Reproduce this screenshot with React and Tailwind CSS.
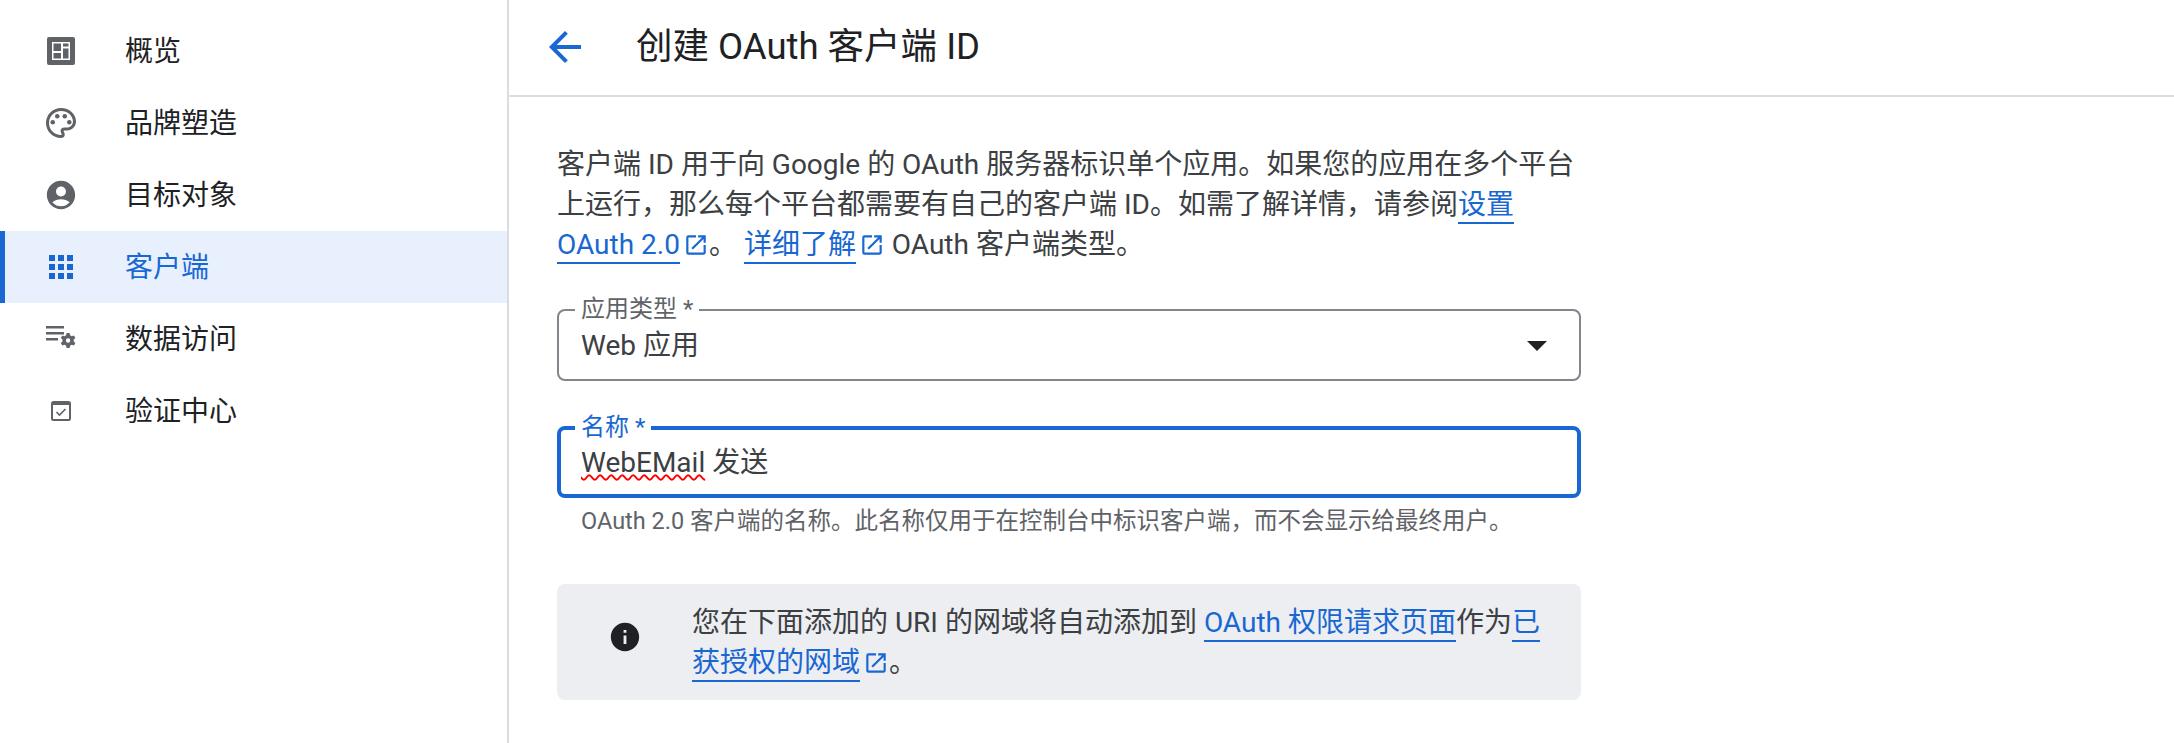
const font = { fontFamily: "Roboto, 'Noto Sans CJK SC', sans-serif" };

const ExternalIcon = ({ className }) => (
  <svg viewBox="0 0 24 24" className={className} fill="currentColor">
    <path d="M19 19H5V5h7V3H5a2 2 0 0 0-2 2v14a2 2 0 0 0 2 2h14c1.1 0 2-.9 2-2v-7h-2v7zM14 3v2h3.59l-9.83 9.83 1.41 1.41L19 6.41V10h2V3h-7z" />
  </svg>
);

const OverviewIcon = () => (
  <svg viewBox="0 0 28 28" className="w-[28px] h-[28px]" fill="#5f6368">
    <path
      fillRule="evenodd"
      d="M2 0h24a2 2 0 0 1 2 2v24a2 2 0 0 1-2 2H2a2 2 0 0 1-2-2V2a2 2 0 0 1 2-2zM5 5v18h18V5H5zm1.5 1.5h7.5v7.5H6.500V6.500zm9.500 0h5.500v3H16v-3zm0 5h5.500v10H16v-10zM6.500 16H14v5.500H6.500V16z"
    />
  </svg>
);

const PaletteIcon = () => (
  <svg viewBox="0 0 24 24" className="w-[36px] h-[36px]" fill="#5f6368">
    <path d="M12 22C6.49 22 2 17.51 2 12S6.49 2 12 2s10 4.04 10 9c0 3.31-2.69 6-6 6h-1.77c-.28 0-.5.22-.5.5 0 .12.05.23.13.33.41.47.64 1.06.64 1.67A2.5 2.5 0 0 1 12 22zm0-18c-4.41 0-8 3.59-8 8s3.59 8 8 8c.28 0 .5-.22.5-.5a.54.54 0 0 0-.14-.35c-.41-.46-.63-1.05-.63-1.65a2.5 2.5 0 0 1 2.5-2.5H16c2.21 0 4-1.79 4-4 0-3.86-3.59-7-8-7z" />
    <circle cx="6.500" cy="11.500" r="1.500" />
    <circle cx="9.500" cy="7.500" r="1.500" />
    <circle cx="14.500" cy="7.500" r="1.500" />
    <circle cx="17.500" cy="11.500" r="1.500" />
  </svg>
);

const AccountIcon = () => (
  <svg viewBox="0 0 24 24" className="w-[34px] h-[34px]" fill="#5f6368">
    <path d="M12 2C6.48 2 2 6.48 2 12s4.48 10 10 10 10-4.48 10-10S17.52 2 12 2zm0 4c1.93 0 3.5 1.57 3.5 3.5S13.93 13 12 13s-3.5-1.57-3.5-3.5S10.07 6 12 6zm0 14c-2.03 0-4.43-.82-6.14-2.88C7.55 15.8 9.68 15 12 15s4.45.8 6.14 2.12C16.43 19.18 14.03 20 12 20z" />
  </svg>
);

const AppsIcon = () => (
  <svg viewBox="0 0 24 24" className="w-[24px] h-[24px]" fill="#1967d2">
    <path d="M0 0h6v6H0zM9 0h6v6H9zM18 0h6v6h-6zM0 9h6v6H0zM9 9h6v6H9zM18 9h6v6h-6zM0 18h6v6H0zM9 18h6v6H9zM18 18h6v6h-6z" />
  </svg>
);

const DataIcon = () => (
  <svg viewBox="0 0 30 26" className="w-[30px] h-[26px]" fill="#5f6368">
    <path d="M0 0h18v2.500H0zM0 6h18v2.500H0zM0 12h12v2.500H0z" />
    <path
      fillRule="evenodd"
      d="M20.600 7h3l.5 2.300 1.600.9 2.200-.8 1.500 2.600-1.700 1.600v1.800l1.700 1.600-1.500 2.600-2.200-.8-1.600.9-.5 2.300h-3l-.5-2.300-1.600-.9-2.200.8-1.500-2.600 1.700-1.600v-1.800l-1.700-1.600 1.500-2.600 2.200.8 1.600-.9zM22.100 12.300a2.200 2.200 0 1 0 0 4.400 2.200 2.200 0 0 0 0-4.400z"
    />
  </svg>
);

const CheckIcon = () => (
  <svg viewBox="0 0 20 20" className="w-[20px] h-[20px]" fill="none">
    <rect x="1" y="1" width="18" height="18" rx="1.500" stroke="#5f6368" strokeWidth="2" />
    <path d="M1 2.500h18" stroke="#5f6368" strokeWidth="3" />
    <path d="M5.500 11l3 3 6-6" stroke="#5f6368" strokeWidth="1.600" />
  </svg>
);

const menuItems = [
  { label: "概览", icon: <OverviewIcon /> },
  { label: "品牌塑造", icon: <PaletteIcon /> },
  { label: "目标对象", icon: <AccountIcon /> },
  { label: "客户端", icon: <AppsIcon />, active: true },
  { label: "数据访问", icon: <DataIcon /> },
  { label: "验证中心", icon: <CheckIcon /> },
];

const SideBar = () => {
  return (
    <div className="w-[509px] shrink-0 border-r-2 border-[#dadce0] pt-[15px]">
      {menuItems.map((item) => {
        return (
          <div
            key={item.label}
            className={
              item.active
                ? "h-[72px] flex items-center border-l-[5px] border-[#1967d2] bg-[#e8f0fe] text-[#1967d2]"
                : "h-[72px] flex items-center border-l-[5px] border-transparent text-[#202124]"
            }
          >
            <div className="w-[112px] shrink-0 flex justify-center">{item.icon}</div>
            <span className="text-[28px] leading-[36px] pl-[8px] mt-[2px]">{item.label}</span>
          </div>
        );
      })}
    </div>
  );
};

const TextLink = ({ children }) => (
  <span className="text-[#1967d2] border-b-2 border-[#1967d2] pb-px">{children}</span>
);

const App = () => {
  return (
    <div style={font} className="flex h-[743px] w-[2174px] overflow-hidden bg-white">
      <SideBar />
      <div className="flex-1">
        <div className="h-[97px] border-b-2 border-[#dadce0] flex items-center pl-[32px]">
          <svg viewBox="0 0 24 24" className="w-[48px] h-[48px] -mt-[2px]" fill="#1967d2">
            <path d="M20 11H7.830l5.590-5.590L12 4l-8 8 8 8 1.410-1.410L7.830 13H20v-2z" />
          </svg>
          <h1 className="ml-[47px] text-[36.500px] font-normal text-[#202124]">创建 OAuth 客户端 ID</h1>
        </div>
        <div className="pl-[48px] w-[1072px] pt-[48px]">
          <p className="text-[28px] leading-[40px] text-[#3c4043]">
            客户端 ID 用于向 Google 的 OAuth 服务器标识单个应用。如果您的应用在多个平台上运行，那么每个平台都需要有自己的客户端 ID。如需了解详情，请参阅
            <TextLink>设置</TextLink> <TextLink>OAuth 2.0</TextLink>
            <ExternalIcon className="inline w-[26px] h-[26px] ml-[3px] text-[#1967d2] align-[-4px]" />
            。 <TextLink>详细了解</TextLink>
            <ExternalIcon className="inline w-[26px] h-[26px] ml-[3px] text-[#1967d2] align-[-4px]" />
            {" "}OAuth 客户端类型。
          </p>

          <div className="relative mt-[44px] h-[72px] border-2 border-[#80868b] rounded-[8px] flex items-center justify-between pl-[22px] pr-[32px] pt-[2px]">
            <span className="absolute -top-[14px] left-[16px] bg-white px-[6px] text-[24px] leading-[24px] text-[#5f6368]">应用类型 *</span>
            <span className="text-[28px] text-[#3c4043]">Web 应用</span>
            <span className="w-0 h-0 border-l-[10px] border-r-[10px] border-t-[10px] border-l-transparent border-r-transparent border-t-[#202124]"></span>
          </div>

          <div className="relative mt-[45px] h-[72px] border-[4px] border-[#1967d2] rounded-[8px] flex items-center pl-[20px] pt-[2px]">
            <span className="absolute -top-[15px] left-[14px] bg-white px-[6px] text-[24px] leading-[24px] text-[#1967d2]">名称 *</span>
            <span className="text-[28px] text-[#3c4043]">
              <span className="underline decoration-wavy decoration-[#ff0000] decoration-2 underline-offset-2">WebEMail</span> 发送
            </span>
          </div>
          <p className="mt-[9px] pl-[24px] text-[23.500px] leading-[28px] text-[#5f6368]">
            OAuth 2.0 客户端的名称。此名称仅用于在控制台中标识客户端，而不会显示给最终用户。
          </p>

          <div className="mt-[49px] h-[116px] bg-[#edeef2] rounded-[8px] flex items-center">
            <div className="w-[135px] shrink-0 flex justify-center">
              <svg viewBox="0 0 24 24" className="w-[34px] h-[34px] -mt-[10px]" fill="#202124">
                <path d="M12 2C6.48 2 2 6.48 2 12s4.48 10 10 10 10-4.48 10-10S17.52 2 12 2zm1 15h-2v-6h2v6zm0-8h-2V7h2v2z" />
              </svg>
            </div>
            <p className="text-[28px] leading-[40px] text-[#3c4043] pr-[36px] pt-[2px]">
              您在下面添加的 URI 的网域将自动添加到 <TextLink>OAuth 权限请求页面</TextLink>作为<TextLink>已获授权的网域</TextLink>
              <ExternalIcon className="inline w-[26px] h-[26px] ml-[3px] text-[#1967d2] align-[-4px]" />。
            </p>
          </div>
        </div>
      </div>
    </div>
  );
};

export default App;
